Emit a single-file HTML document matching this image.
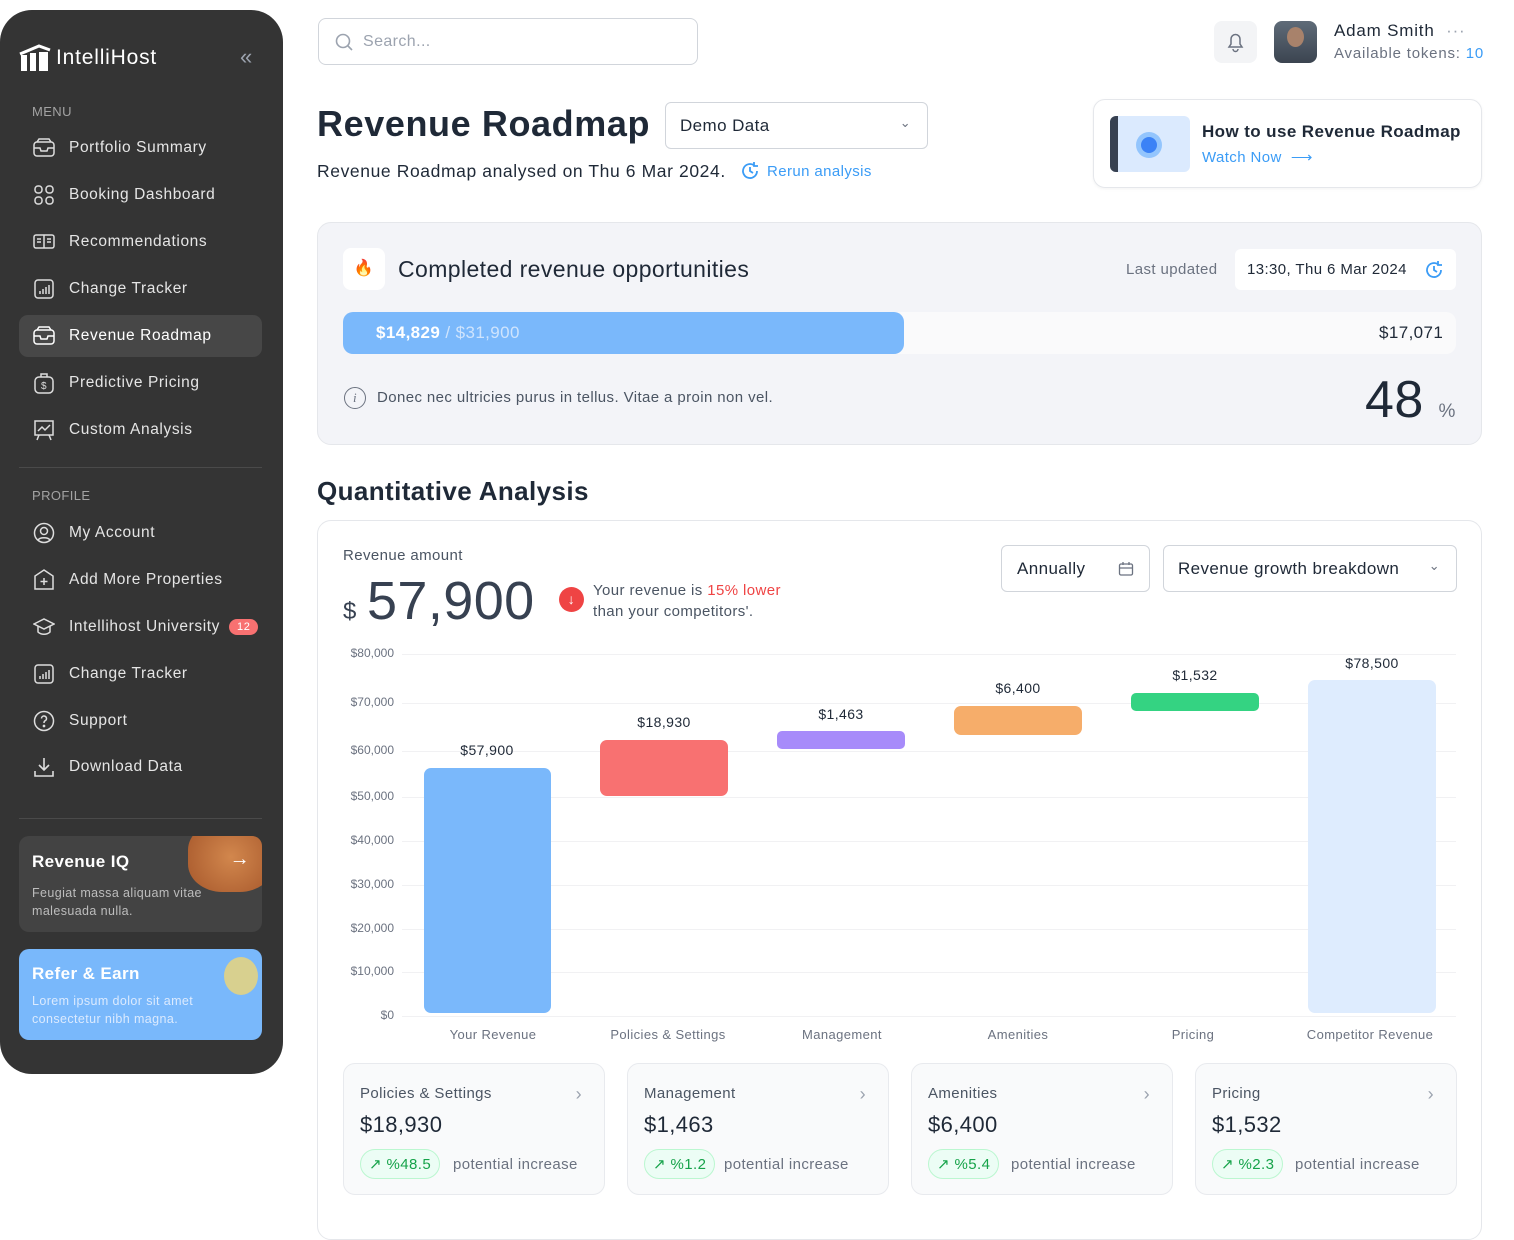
<!DOCTYPE html>
<html><head><meta charset="utf-8"><style>
*{box-sizing:border-box;margin:0;padding:0}
body{width:1514px;height:1222px;background:#fff;font-family:"Liberation Sans",sans-serif;position:relative;overflow:hidden;color:#1f2937;letter-spacing:0.4px}
.a{position:absolute}
.sb{left:0;top:10px;width:283px;height:1064px;background:#343434;border-radius:32px 32px 32px 32px}
.nav{position:absolute;left:19px;width:243px;height:42px;display:flex;align-items:center;color:#e5e5e5;font-size:15.5px;letter-spacing:0.6px}
.nav svg{margin-left:14px;margin-right:14px}
.sec{position:absolute;left:32px;color:#a3a3a3;font-size:13px}
.yl{position:absolute;left:330px;width:64px;text-align:right;font-size:12px;color:#6b7280;letter-spacing:0}
.gl{position:absolute;left:402px;width:1054px;height:1px;background:#f1f1f3}
.bar{position:absolute;border-radius:7px}
.bl{position:absolute;font-size:14px;color:#1f2937;text-align:center;width:128px}
.xl{position:absolute;top:1027px;font-size:13px;color:#6b7280;text-align:center;width:170px}
.card{position:absolute;top:1063px;width:262px;height:132px;border:1px solid #e8eaee;border-radius:12px;background:#f9fafb}
.card .t{position:absolute;left:16px;top:21px;font-size:15px;color:#4b5563}
.card .v{position:absolute;left:16px;top:48px;font-size:22px;color:#1f2937}
.card .ch{position:absolute;right:22px;top:20px;color:#9ca3af;font-size:18px}
.card .p{position:absolute;left:16px;top:85px;height:30px;border:1px solid #bbf7d0;background:#ecfdf5;border-radius:15px;color:#16a34a;font-size:15px;display:flex;align-items:center;padding:0 8px}
.card .pi{position:absolute;top:92px;font-size:15px;color:#6b7280}
</style></head><body>
<div class="a sb"></div>
<div class="a" style="left:19px;top:44px;color:#fff;font-size:21px;font-weight:bold;display:flex;align-items:center">
<svg width="32" height="28" viewBox="0 0 32 28"><path d="M1 10 L20 2 L31 6" stroke="#fff" stroke-width="3" fill="none"/><rect x="2" y="11" width="6" height="16" fill="#fff"/><rect x="11" y="9" width="6" height="18" fill="#fff"/><rect x="20" y="8" width="9" height="19" fill="#fff"/></svg>
<span style="margin-left:5px;font-weight:normal;letter-spacing:0.8px">IntelliHost</span></div>
<div class="a" style="left:240px;top:44px;color:#9ca3af;font-size:22px">«</div>
<div class="sec" style="top:104px">MENU</div>
<div class="nav" style="top:127px"><svg width="22" height="20" fill="none" stroke="#ddd" stroke-width="1.5"><rect x="1" y="4" width="20" height="14" rx="3"/><path d="M1 10h6l1 3h6l1-3h6M4 4l2-3h10l2 3"/></svg>Portfolio Summary</div>
<div class="nav" style="top:174px"><svg width="22" height="20" fill="none" stroke="#ddd" stroke-width="1.5"><rect x="2" y="1" width="7" height="7" rx="3"/><rect x="13" y="1" width="7" height="7" rx="3"/><rect x="2" y="12" width="7" height="7" rx="3"/><rect x="13" y="12" width="7" height="7" rx="3"/></svg>Booking Dashboard</div>
<div class="nav" style="top:221px"><svg width="22" height="20" fill="none" stroke="#ddd" stroke-width="1.5"><rect x="1" y="3" width="20" height="13" rx="2"/><path d="M11 3v13M4 7h4M4 10h4M14 7h4M14 10h4"/></svg>Recommendations</div>
<div class="nav" style="top:268px"><svg width="22" height="20" fill="none" stroke="#ddd" stroke-width="1.5"><rect x="2" y="1" width="18" height="18" rx="3"/><path d="M7 15v-3M10 15v-5M13 15v-7M16 15v-9"/></svg>Change Tracker</div>
<div class="a" style="left:19px;top:315px;width:243px;height:42px;background:#474747;border-radius:9px"></div>
<div class="nav" style="top:315px;color:#fff"><svg width="22" height="20" fill="none" stroke="#fff" stroke-width="1.5"><rect x="1" y="4" width="20" height="14" rx="3"/><path d="M1 10h6l1 3h6l1-3h6M4 4l2-3h10l2 3"/></svg>Revenue Roadmap</div>
<div class="nav" style="top:362px"><svg width="22" height="22" fill="none" stroke="#ddd" stroke-width="1.5"><rect x="2" y="5" width="18" height="16" rx="4"/><path d="M8 5V2h6v3"/><text x="8" y="17" font-size="10" fill="#ddd" stroke="none">$</text></svg>Predictive Pricing</div>
<div class="nav" style="top:409px"><svg width="22" height="22" fill="none" stroke="#ddd" stroke-width="1.5"><rect x="2" y="2" width="18" height="14"/><path d="M5 12l4-4 3 3 5-5M6 16l-2 5M16 16l2 5"/></svg>Custom Analysis</div>
<div class="a" style="left:19px;top:467px;width:243px;height:1px;background:#4a4a4a"></div>
<div class="sec" style="top:488px">PROFILE</div>
<div class="nav" style="top:512px"><svg width="22" height="22" fill="none" stroke="#ddd" stroke-width="1.5"><circle cx="11" cy="11" r="9.5"/><circle cx="11" cy="9" r="3.5"/><path d="M5 18c2-3 10-3 12 0"/></svg>My Account</div>
<div class="nav" style="top:559px"><svg width="22" height="22" fill="none" stroke="#ddd" stroke-width="1.5"><path d="M11 1l9 6v13H2V7z"/><path d="M11 9v7M7.5 12.5h7"/></svg>Add More Properties</div>
<div class="nav" style="top:606px"><svg width="22" height="22" fill="none" stroke="#ddd" stroke-width="1.5"><path d="M1 8l10-5 10 5-10 5z"/><path d="M5 10v6c3 3 9 3 12 0v-6"/></svg>Intellihost University<span style="margin-left:9px;background:#f87171;color:#fff;font-size:11px;border-radius:10px;padding:2px 8px">12</span></div>
<div class="nav" style="top:653px"><svg width="22" height="20" fill="none" stroke="#ddd" stroke-width="1.5"><rect x="2" y="1" width="18" height="18" rx="3"/><path d="M7 15v-3M10 15v-5M13 15v-7M16 15v-9"/></svg>Change Tracker</div>
<div class="nav" style="top:700px"><svg width="22" height="22" fill="none" stroke="#ddd" stroke-width="1.5"><circle cx="11" cy="11" r="9.5"/><path d="M8.5 8.5a2.5 2.5 0 1 1 3.5 2.3c-1 .5-1 1-1 2.2"/><circle cx="11" cy="16" r=".6" fill="#ddd"/></svg>Support</div>
<div class="nav" style="top:746px"><svg width="22" height="22" fill="none" stroke="#ddd" stroke-width="1.6"><path d="M11 2v12M6 9l5 5 5-5M2 15v5h18v-5"/></svg>Download Data</div>
<div class="a" style="left:19px;top:818px;width:243px;height:1px;background:#4a4a4a"></div>
<div class="a" style="left:19px;top:836px;width:243px;height:96px;background:#434343;border-radius:10px;overflow:hidden">
<div class="a" style="right:-12px;top:-14px;width:86px;height:70px;background:radial-gradient(circle,#d2874d,#a6572b);border-radius:40%"></div>
<div class="a" style="left:13px;top:16px;color:#fff;font-size:17px;font-weight:bold">Revenue IQ</div>
<div class="a" style="right:12px;top:12px;color:#fff;font-size:20px">→</div>
<div class="a" style="left:13px;top:48px;color:#bdbdbd;font-size:12.5px;line-height:18px">Feugiat massa aliquam vitae<br>malesuada nulla.</div></div>
<div class="a" style="left:19px;top:949px;width:243px;height:91px;background:#79b8fb;border-radius:10px;overflow:hidden">
<div class="a" style="right:4px;top:8px;width:34px;height:38px;background:#d8d08f;border-radius:50%"></div>
<div class="a" style="left:13px;top:15px;color:#fff;font-size:17px;font-weight:bold">Refer &amp; Earn</div>
<div class="a" style="left:13px;top:43px;color:#dbeafe;font-size:12.5px;line-height:18px">Lorem ipsum dolor sit amet<br>consectetur nibh magna.</div></div>

<!-- header -->
<div class="a" style="left:318px;top:18px;width:380px;height:47px;border:1px solid #d1d5db;border-radius:8px;display:flex;align-items:center;padding-left:16px;color:#9ca3af;font-size:16px"><svg width="18" height="18" fill="none" stroke="#9ca3af" stroke-width="1.6" style="margin-right:10px"><circle cx="8" cy="8" r="6.5"/><path d="M13 13l4 4"/></svg>Search...</div>
<div class="a" style="left:1214px;top:21px;width:43px;height:42px;background:#f3f4f6;border-radius:8px"><svg width="43" height="42" fill="none" stroke="#6b7280" stroke-width="1.5"><path d="M15 26h13l-2-3v-5a4.5 4.5 0 0 0-9 0v5zM19 28a2.5 2.5 0 0 0 5 0"/></svg></div>
<div class="a" style="left:1274px;top:21px;width:43px;height:42px;border-radius:8px;background:linear-gradient(#5f6b78,#3b4450)"><div class="a" style="left:13px;top:6px;width:17px;height:20px;border-radius:50%;background:#a8826b"></div></div>
<div class="a" style="left:1334px;top:21px;font-size:17px;color:#1f2937;letter-spacing:0.8px">Adam Smith <span style="color:#9ca3af;margin-left:6px">···</span></div>
<div class="a" style="left:1334px;top:45px;font-size:15px;color:#6b7280;letter-spacing:0.8px">Available tokens: <span style="color:#3b9cf6">10</span></div>

<div class="a" style="left:317px;top:103px;font-size:36px;font-weight:bold;color:#1f2937;letter-spacing:0.6px">Revenue Roadmap</div>
<div class="a" style="left:665px;top:102px;width:263px;height:47px;border:1px solid #d1d5db;border-radius:6px;padding:13px 14px;font-size:17px;color:#1f2937">Demo Data<span style="position:absolute;right:16px;top:12px;color:#6b7280;font-size:13px">⌄</span></div>
<div class="a" style="left:317px;top:161px;font-size:17.5px;color:#1f2937;letter-spacing:0.6px">Revenue Roadmap analysed on Thu 6 Mar 2024.</div>
<div class="a" style="left:740px;top:161px;font-size:15px;color:#3b9cf6;display:flex;align-items:center"><svg width="20" height="20" fill="none" stroke="#3b9cf6" stroke-width="1.8" style="margin-right:7px"><path d="M17 10a7 7 0 1 1-3-5.7M14 1v4h4"/><path d="M10 6v4l3 2"/></svg>Rerun analysis</div>

<div class="a" style="left:1093px;top:99px;width:389px;height:89px;border:1px solid #e5e7eb;border-radius:12px;box-shadow:0 1px 3px rgba(0,0,0,.05)">
<div class="a" style="left:16px;top:16px;width:80px;height:56px;border-radius:6px;background:#dbeafe;overflow:hidden"><div class="a" style="left:0;top:0;width:8px;height:56px;background:#374151"></div><div class="a" style="left:26px;top:16px;width:26px;height:26px;border-radius:50%;background:#93c5fd"></div><div class="a" style="left:31px;top:21px;width:16px;height:16px;border-radius:50%;background:#3b82f6"></div></div>
<div class="a" style="left:108px;top:22px;font-size:17px;font-weight:bold;color:#1f2937">How to use Revenue Roadmap</div>
<div class="a" style="left:108px;top:48px;font-size:15px;color:#3b9cf6">Watch Now &nbsp;⟶</div></div>

<!-- completed -->
<div class="a" style="left:317px;top:222px;width:1165px;height:223px;background:#f3f4f8;border:1px solid #e5e7eb;border-radius:14px"></div>
<div class="a" style="left:343px;top:248px;width:42px;height:42px;background:#fff;border-radius:8px;text-align:center;line-height:42px;color:#ef4444;font-size:16px">🔥</div>
<div class="a" style="left:398px;top:256px;font-size:23px;color:#1f2937">Completed revenue opportunities</div>
<div class="a" style="left:1126px;top:261px;font-size:15px;color:#6b7280">Last updated</div>
<div class="a" style="left:1235px;top:249px;width:221px;height:41px;background:#fff;border-radius:6px;padding:12px;font-size:15px;color:#1f2937">13:30, Thu 6 Mar 2024<svg width="20" height="20" fill="none" stroke="#3b9cf6" stroke-width="1.8" style="position:absolute;right:12px;top:11px"><path d="M17 10a7 7 0 1 1-3-5.7M14 1v4h4"/><path d="M10 6v4l3 2"/></svg></div>
<div class="a" style="left:343px;top:312px;width:1113px;height:42px;background:#fafafb;border-radius:10px"></div>
<div class="a" style="left:343px;top:312px;width:561px;height:42px;background:#7ab8fb;border-radius:10px;padding:11px 33px;font-size:17px;color:#fff;font-weight:bold">$14,829 <span style="font-weight:normal;color:#cfe4fd">/ $31,900</span></div>
<div class="a" style="left:1379px;top:323px;font-size:17px;color:#1f2937">$17,071</div>
<div class="a" style="left:344px;top:387px;width:22px;height:22px;border:1.6px solid #6b7280;border-radius:50%;text-align:center;font-size:13px;line-height:19px;color:#6b7280;font-family:'Liberation Serif',serif;font-style:italic">i</div>
<div class="a" style="left:377px;top:389px;font-size:15px;color:#4b5563">Donec nec ultricies purus in tellus. Vitae a proin non vel.</div>
<div class="a" style="left:1365px;top:370px;font-size:52px;color:#1f2937">48 <span style="font-size:19px;color:#6b7280">%</span></div>

<div class="a" style="left:317px;top:476px;font-size:26px;font-weight:bold;color:#1f2937">Quantitative Analysis</div>
<div class="a" style="left:317px;top:520px;width:1165px;height:720px;border:1px solid #e5e7eb;border-radius:14px"></div>
<div class="a" style="left:343px;top:547px;font-size:15px;color:#4b5563">Revenue amount</div>
<div class="a" style="left:343px;top:598px;font-size:24px;color:#374151">$</div>
<div class="a" style="left:367px;top:570px;font-size:54px;color:#374151">57,900</div>
<div class="a" style="left:559px;top:587px;width:25px;height:25px;border-radius:50%;background:#ef4444;color:#fff;text-align:center;font-size:14px;line-height:25px">↓</div>
<div class="a" style="left:593px;top:580px;font-size:15px;color:#4b5563;line-height:21px">Your revenue is <span style="color:#ef4444">15% lower</span><br>than your competitors'.</div>
<div class="a" style="left:1001px;top:545px;width:149px;height:47px;border:1px solid #d1d5db;border-radius:6px;padding:13px 15px;font-size:17px;color:#1f2937">Annually<svg width="16" height="16" fill="none" stroke="#6b7280" stroke-width="1.3" style="position:absolute;right:15px;top:15px"><rect x="1.5" y="3" width="13" height="11" rx="1.5"/><path d="M1.5 7h13M5 1v3M11 1v3"/></svg></div>
<div class="a" style="left:1163px;top:545px;width:294px;height:47px;border:1px solid #d1d5db;border-radius:6px;padding:13px 14px;font-size:17px;color:#1f2937">Revenue growth breakdown<span style="position:absolute;right:16px;top:12px;color:#6b7280;font-size:13px">⌄</span></div>

<div class="yl" style="top:646px">$80,000</div><div class="gl" style="top:654px"></div>
<div class="yl" style="top:695px">$70,000</div><div class="gl" style="top:703px"></div>
<div class="yl" style="top:743px">$60,000</div><div class="gl" style="top:751px"></div>
<div class="yl" style="top:789px">$50,000</div><div class="gl" style="top:797px"></div>
<div class="yl" style="top:833px">$40,000</div><div class="gl" style="top:841px"></div>
<div class="yl" style="top:877px">$30,000</div><div class="gl" style="top:885px"></div>
<div class="yl" style="top:921px">$20,000</div><div class="gl" style="top:929px"></div>
<div class="yl" style="top:964px">$10,000</div><div class="gl" style="top:972px"></div>
<div class="yl" style="top:1008px">$0</div><div class="gl" style="top:1016px"></div>

<div class="bar" style="left:424px;top:768px;width:127px;height:245px;background:#7ab8fb"></div>
<div class="bar" style="left:600px;top:740px;width:128px;height:56px;background:#f87171"></div>
<div class="bar" style="left:777px;top:731px;width:128px;height:18px;background:#a78bfa;border-radius:5px"></div>
<div class="bar" style="left:954px;top:706px;width:128px;height:29px;background:#f6ad6a"></div>
<div class="bar" style="left:1131px;top:693px;width:128px;height:18px;background:#34d382;border-radius:5px"></div>
<div class="bar" style="left:1308px;top:680px;width:128px;height:333px;background:#deecfe"></div>
<div class="bl" style="left:423px;top:742px">$57,900</div>
<div class="bl" style="left:600px;top:714px">$18,930</div>
<div class="bl" style="left:777px;top:706px">$1,463</div>
<div class="bl" style="left:954px;top:680px">$6,400</div>
<div class="bl" style="left:1131px;top:667px">$1,532</div>
<div class="bl" style="left:1308px;top:655px">$78,500</div>
<div class="xl" style="left:408px">Your Revenue</div>
<div class="xl" style="left:583px">Policies &amp; Settings</div>
<div class="xl" style="left:757px">Management</div>
<div class="xl" style="left:933px">Amenities</div>
<div class="xl" style="left:1108px">Pricing</div>
<div class="xl" style="left:1285px">Competitor Revenue</div>

<div class="card" style="left:343px"><div class="t">Policies &amp; Settings</div><div class="ch">›</div><div class="v">$18,930</div><div class="p">↗&nbsp;%48.5</div><div class="pi" style="left:109px">potential increase</div></div>
<div class="card" style="left:627px"><div class="t">Management</div><div class="ch">›</div><div class="v">$1,463</div><div class="p">↗&nbsp;%1.2</div><div class="pi" style="left:96px">potential increase</div></div>
<div class="card" style="left:911px"><div class="t">Amenities</div><div class="ch">›</div><div class="v">$6,400</div><div class="p">↗&nbsp;%5.4</div><div class="pi" style="left:99px">potential increase</div></div>
<div class="card" style="left:1195px"><div class="t">Pricing</div><div class="ch">›</div><div class="v">$1,532</div><div class="p">↗&nbsp;%2.3</div><div class="pi" style="left:99px">potential increase</div></div>
</body></html>
